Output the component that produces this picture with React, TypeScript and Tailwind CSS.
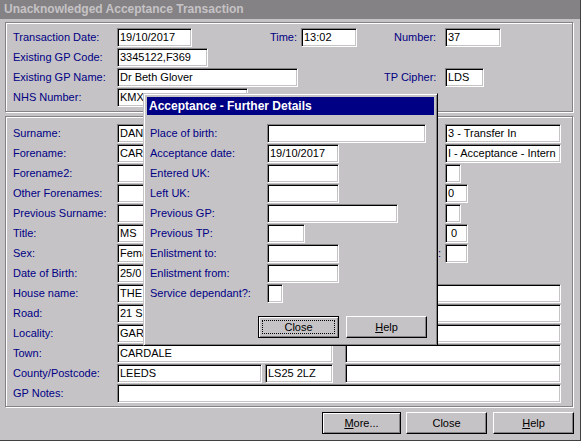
import React from "react";

const Field = ({ w, value = "", className = "" }: { w: string; value?: string; className?: string }) => (
  <div
    className={`h-[19px] ${w} shrink-0 overflow-hidden whitespace-nowrap border border-t-[#848284] border-l-[#848284] border-b-white border-r-white bg-white pl-[2px] text-[11px] leading-[17px] text-black shadow-[inset_1px_1px_0_#000,inset_-1px_-1px_0_#c6c3c6] ${className}`}
  >
    {value}
  </div>
);

const Label = ({ children, className = "w-[104px]" }: { children: React.ReactNode; className?: string }) => (
  <div className={`${className} shrink-0 whitespace-nowrap leading-[19px] text-[#000084]`}>{children}</div>
);

const Button = ({
  children,
  w,
  isDefault = false,
  focused = false,
}: {
  children: React.ReactNode;
  w: string;
  isDefault?: boolean;
  focused?: boolean;
}) => (
  <div
    className={`relative flex h-[22px] ${w} shrink-0 items-center justify-center text-[11px] text-black ${
      isDefault
        ? "border border-black shadow-[inset_1px_1px_0_#fff,inset_-1px_-1px_0_#848284]"
        : "border border-t-white border-l-white border-r-black border-b-black shadow-[inset_-1px_-1px_0_#848284]"
    }`}
  >
    {focused && <span className="absolute inset-[3px] border border-dotted border-black" />}
    <span className="relative">{children}</span>
  </div>
);

function FurtherDetails() {
  const rows: [string, string, string?][] = [
    ["Place of birth:", "w-[159px]"],
    ["Acceptance date:", "w-[72px]", "19/10/2017"],
    ["Entered UK:", "w-[72px]"],
    ["Left UK:", "w-[72px]"],
    ["Previous GP:", "w-[131px]"],
    ["Previous TP:", "w-[38px]"],
    ["Enlistment to:", "w-[72px]"],
    ["Enlistment from:", "w-[72px]"],
    ["Service dependant?:", "w-[16px]"],
  ];
  return (
    <div className="absolute left-[143px] top-[93px] h-[253px] w-[295px] border border-t-[#c6c3c6] border-l-[#c6c3c6] border-r-black border-b-black bg-[#c6c3c6] p-[3px] shadow-[inset_1px_1px_0_#fff,inset_-1px_-1px_0_#848284]">
      <div className="h-[18px] bg-[#000084] pl-[2px] text-[12px] font-bold leading-[18px] text-white">
        Acceptance - Further Details
      </div>
      <div className="mt-[9px] pl-[3px]">
        {rows.map(([label, w, value]) => (
          <div key={label} className="flex h-5">
            <Label className="w-[117px]">{label}</Label>
            <Field w={w} value={value} />
          </div>
        ))}
      </div>
      <div className="mt-[12px] flex">
        <div className="ml-[111px]">
          <Button w="w-[81px]" isDefault focused>
            Close
          </Button>
        </div>
        <div className="ml-[7px]">
          <Button w="w-[81px]">
            <u>H</u>elp
          </Button>
        </div>
      </div>
    </div>
  );
}

export default function App() {
  // only the part of each value that shows beside the dialog is kept
  const leftRows: { label: string; value: string; right?: React.ReactNode; hidden?: string }[] = [
    { label: "Surname:", value: "DAN", right: <Field w="w-[116px]" value="3 - Transfer In" /> },
    { label: "Forename:", value: "CAR", right: <Field w="w-[116px]" value="I - Acceptance - Intern" /> },
    { label: "Forename2:", value: "", right: <Field w="w-[16px]" /> },
    { label: "Other Forenames:", value: "", right: <Field w="w-[23px]" value="0" /> },
    { label: "Previous Surname:", value: "", right: <Field w="w-[16px]" /> },
    { label: "Title:", value: "MS", right: <Field w="w-[23px]" value="0" className="pl-[5px]" /> },
    { label: "Sex:", value: "Fema", right: <Field w="w-[23px]" />, hidden: ":" },
    { label: "Date of Birth:", value: "25/0" },
  ];
  const addrRows = [
    { label: "House name:", value: "THE" },
    { label: "Road:", value: "21 S" },
    { label: "Locality:", value: "GAR" },
    { label: "Town:", value: "CARDALE" },
  ];

  return (
    <div className="relative h-[442px] w-[582px] overflow-hidden bg-white font-['Liberation_Sans',Arial,sans-serif] text-[11px]">
      <div className="h-[441px] w-[581px] border-r border-b border-[#424142] bg-[#c6c3c6]">
        <div className="h-[19px] bg-[#848284] pl-[4px] text-[12px] font-bold leading-[19px] text-[#c6c3c6]">
          Unacknowledged Acceptance Transaction
        </div>

        <div className="ml-[5px] mt-[3px] h-[90px] w-[568px] border border-[#848284] pl-[7px] pt-[5px] shadow-[inset_1px_1px_0_#fff,1px_1px_0_#fff]">
          <div className="flex h-5">
            <Label>Transaction Date:</Label>
            <Field w="w-[75px]" value="19/10/2017" />
            <Label className="w-[105px] text-right">Time:</Label>
            <Field w="w-[56px]" value="13:02" className="ml-[4px]" />
            <Label className="ml-[37px] w-[51px]">Number:</Label>
            <Field w="w-[56px]" value="37" />
          </div>
          <div className="flex h-5">
            <Label>Existing GP Code:</Label>
            <Field w="w-[91px]" value="3345122,F369" />
          </div>
          <div className="flex h-5">
            <Label>Existing GP Name:</Label>
            <Field w="w-[181px]" value="Dr Beth Glover" />
            <Label className="ml-[86px] w-[61px]">TP Cipher:</Label>
            <Field w="w-[39px]" value="LDS" />
          </div>
          <div className="flex h-5">
            <Label>NHS Number:</Label>
            <Field w="w-[131px]" value="KMXF 38340" />
          </div>
        </div>

        <div className="ml-[5px] mt-[4px] h-[291px] w-[568px] border border-[#848284] pl-[7px] pt-[7px] shadow-[inset_1px_1px_0_#fff,1px_1px_0_#fff]">
          {leftRows.map((r) => (
            <div key={r.label} className="flex h-5">
              <Label>{r.label}</Label>
              <div className="flex w-[328px] shrink-0">
                <Field w="w-[216px]" value={r.value} />
                {r.hidden && <Label className="flex-1 pr-[4px] text-right">{r.hidden}</Label>}
              </div>
              {r.right}
            </div>
          ))}
          {addrRows.map((r) => (
            <div key={r.label} className="flex h-5">
              <Label>{r.label}</Label>
              <Field w="w-[216px]" value={r.value} />
              <Field w="w-[216px]" className="ml-[12px]" />
            </div>
          ))}
          <div className="flex h-5">
            <Label>County/Postcode:</Label>
            <Field w="w-[145px]" value="LEEDS" />
            <Field w="w-[68px]" value="LS25 2LZ" className="ml-[3px]" />
            <Field w="w-[216px]" className="ml-[12px]" />
          </div>
          <div className="flex h-5">
            <Label>GP Notes:</Label>
            <Field w="w-[444px]" />
          </div>
        </div>

        <div className="mt-[5px] flex">
          <div className="ml-[322px]">
            <Button w="w-[79px]" isDefault>
              <u>M</u>ore...
            </Button>
          </div>
          <div className="ml-[5px]">
            <Button w="w-[81px]">Close</Button>
          </div>
          <div className="ml-[6px]">
            <Button w="w-[81px]">
              <u>H</u>elp
            </Button>
          </div>
        </div>
      </div>

      <FurtherDetails />
    </div>
  );
}
